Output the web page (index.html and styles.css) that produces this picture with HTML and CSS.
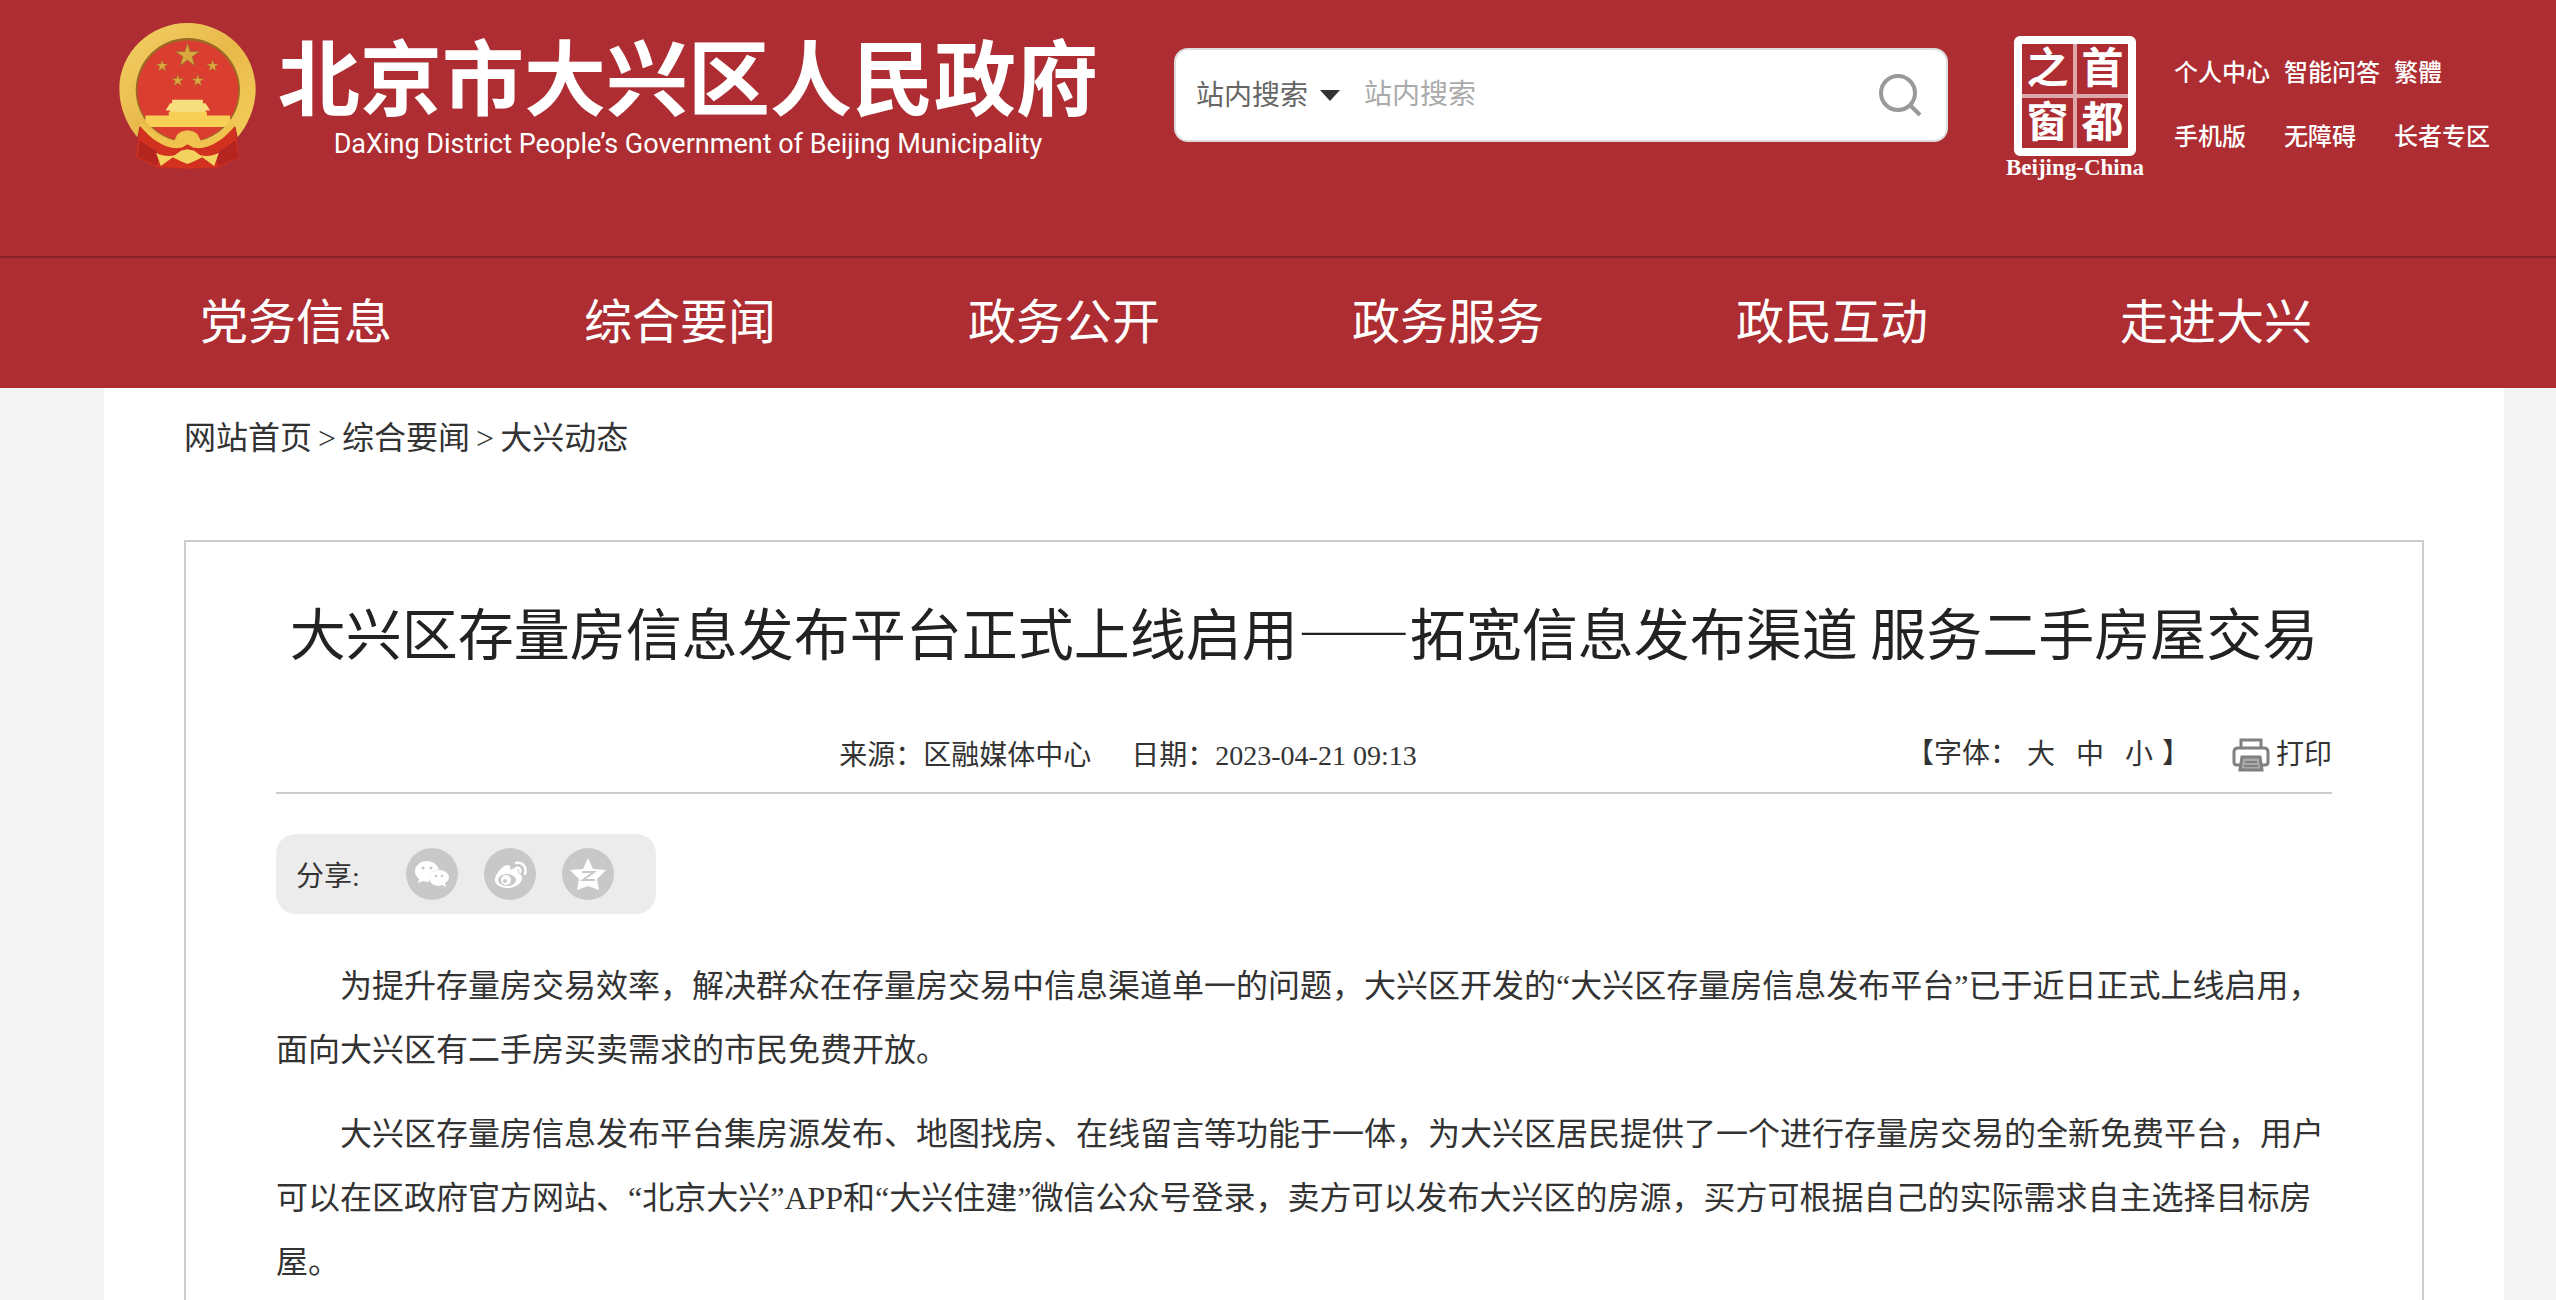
FILE: index.html
```html
<!DOCTYPE html>
<html lang="zh-CN">
<head>
    <meta charset="UTF-8">
    <meta name="viewport" content="width=device-width, initial-scale=1.0">
    <title>大兴区存量房信息发布平台正式上线启用</title>
    <link rel="stylesheet" href="styles.css">
</head>
<body>
    <header class="header">
        <div class="header-top">
            <a class="logo" href="#">
                <svg class="emblem" viewBox="28 35 408 440" aria-hidden="true">
                    <defs>
                        <linearGradient id="gold" x1="0" y1="0" x2="1" y2="1">
                            <stop offset="0" stop-color="#f3d066"/>
                            <stop offset="0.5" stop-color="#e9b94a"/>
                            <stop offset="1" stop-color="#f4cf5c"/>
                        </linearGradient>
                        <path id="star" d="M0-36 8-11H36L14 5 22 32 0 15-22 32-14 5-36-11H-8Z"/>
                    </defs>
                    <path fill="url(#gold)" d="M232 38C120 38 28 126 28 236c0 56 24 108 54 144l6-32c30 38 66 62 112 66h64c46-4 82-28 112-66l6 32c30-36 54-88 54-144C436 126 344 38 232 38Z"/>
                    <circle cx="233" cy="239" r="156" fill="#9a6a25"/>
                    <circle cx="233" cy="241" r="151" fill="#dc3d31"/>
                    <g fill="#d9a93f" stroke="#8d6a25" stroke-width="2">
                        <use href="#star" transform="translate(232 134)"/>
                        <use href="#star" transform="translate(156 166) scale(.5)"/>
                        <use href="#star" transform="translate(307 166) scale(.5)"/>
                        <use href="#star" transform="translate(203 210) scale(.5)"/>
                        <use href="#star" transform="translate(263 210) scale(.5)"/>
                    </g>
                    <path fill="#f7de7e" d="M186 268h92v10h8l14 22h-14v8H180v-8h-14l14-22h6Z"/>
                    <path fill="#f7cf55" d="M176 304h114v11h70v16l-14 18H120l-14-18v-16h70Z"/>
                    <path fill="#d3311f" d="M90 346c40 40 70 62 104 66l38-14 38 14c34-4 64-26 104-66l12 94-60 30-94 4-94-4-60-30Z"/>
                    <path fill="#b5251f" d="M88 390 150 430 140 466 82 440ZM376 390 314 430 324 466 384 440Z"/>
                    <path fill="#f0c24e" d="M94 335c34 38 66 54 98 56l10-20 12-8 18-4 18 4 12 8 10 20c32-2 64-18 98-56l4 10c-30 40-70 66-108 68l-18-2-16-10-16 10-18 2c-38-2-78-28-108-68Z"/>
                    <path fill="#f3d35f" d="M138 426c20 10 36 12 56 8l18-14 20-4 20 4 18 14c20 4 36 2 56-8l-14 40-36-26-24 12-20 8-20-8-24-12-36 26Z"/>
                </svg>
                <span class="logo-text">
                    <span class="logo-cn">北京市大兴区人民政府</span>
                    <span class="logo-en">DaXing District People’s Government of Beijing Municipality</span>
                </span>
            </a>

            <form class="search">
                <select class="search-type" aria-label="搜索范围">
                    <option>站内搜索</option>
                </select>
                <svg class="search-arrow" viewBox="0 0 20 11" aria-hidden="true"><path fill="#333" d="M0 0h20L10 11Z"/></svg>
                <input class="search-input" type="text" placeholder="站内搜索" aria-label="站内搜索">
                <button class="search-button" type="submit" aria-label="搜索">
                    <svg viewBox="0 0 44 44" fill="none" stroke="#999" stroke-width="4" aria-hidden="true">
                        <circle cx="20" cy="20" r="17"/>
                        <path d="m32 32 10 10"/>
                    </svg>
                </button>
            </form>

            <a class="seal" href="#">
                <span class="seal-box">
                    <span>之</span><span>首</span>
                    <span>窗</span><span>都</span>
                </span>
                <span class="seal-name">Beijing-China</span>
            </a>

            <div class="top-links">
                <a href="#">个人中心</a>
                <a href="#">智能问答</a>
                <a href="#">繁體</a>
                <a href="#">手机版</a>
                <a href="#">无障碍</a>
                <a href="#">长者专区</a>
            </div>
        </div>

        <nav class="nav">
            <a href="#">党务信息</a>
            <a href="#">综合要闻</a>
            <a href="#">政务公开</a>
            <a href="#">政务服务</a>
            <a href="#">政民互动</a>
            <a href="#">走进大兴</a>
        </nav>
    </header>

    <main class="container">
        <div class="breadcrumb">
            <a href="#">网站首页</a><span>&gt;</span><a href="#">综合要闻</a><span>&gt;</span><a href="#">大兴动态</a>
        </div>

        <article class="article">
            <h1>大兴区存量房信息发布平台正式上线启用——拓宽信息发布渠道 服务二手房屋交易</h1>

            <div class="meta">
                <div class="meta-info">
                    <span>来源：区融媒体中心</span>
                    <span>日期：2023-04-21 09:13</span>
                </div>
                <div class="meta-tools">
                    <div class="font-size">
                        <span class="font-label">【字体：</span>
                        <button type="button">大</button>
                        <button type="button">中</button>
                        <button type="button">小</button>
                        <span class="bracket">】</span>
                    </div>
                    <button class="print" type="button">
                        <svg viewBox="0 0 38 34" fill="none" stroke="#808080" stroke-width="3" aria-hidden="true">
                            <path d="M9 10V2h20v8"/>
                            <path d="M8 27H5q-3 0-3-3V14q0-4 4-4h26q4 0 4 4v10q0 3-3 3h-3"/>
                            <path fill="#aaa" d="M10 19h18l2 13H8Z"/>
                            <path stroke-width="2" d="M13 24h12M12 28h14"/>
                        </svg>
                        打印
                    </button>
                </div>
            </div>

            <div class="share">
                <span>分享:</span>
                <div class="share-icons">
                    <a href="#" aria-label="微信">
                        <svg viewBox="0 0 52 52" aria-hidden="true">
                            <path fill="#fff" d="M21 13c-7 0-12 5-12 10 0 4 2 6 4 8l-1 4 5-2 4 1h2c-1-8 5-13 10-12-1-5-6-9-12-9Z"/>
                            <path fill="#fff" d="M33 22c-6 0-10 4-10 8s4 8 10 8l3-1 4 2-1-4c2-1 4-3 4-6 0-4-5-7-10-7Z"/>
                            <g fill="#c8c8c8"><circle cx="17" cy="20" r="1.6"/><circle cx="25" cy="20" r="1.6"/><circle cx="30" cy="28" r="1.3"/><circle cx="36" cy="28" r="1.3"/></g>
                        </svg>
                    </a>
                    <a href="#" aria-label="微博">
                        <svg viewBox="0 0 52 52" aria-hidden="true">
                            <path fill="#fff" d="M24 17c-3-1-12 7-13 14-1 5 5 9 12 9 9 0 15-5 15-10 0-3-2-4-4-5 1-4-2-6-8-3 1-3 0-5-2-5Z"/>
                            <ellipse cx="23" cy="32" rx="9" ry="6" fill="#c8c8c8"/>
                            <circle cx="22" cy="32" r="5" fill="#fff"/>
                            <circle cx="21" cy="33" r="2" fill="#c8c8c8"/>
                            <path fill="none" stroke="#fff" stroke-width="2.5" stroke-linecap="round" d="M32 15c7-1 11 4 9 11M32 20c3-1 5 1 4 4"/>
                        </svg>
                    </a>
                    <a href="#" aria-label="QQ空间">
                        <svg viewBox="0 0 52 52" aria-hidden="true">
                            <path fill="#fff" d="m26 10 5 11 13 1-9 9 2 11-11-4-11 4 2-11-9-9 13-1Z"/>
                            <path fill="none" stroke="#c8c8c8" stroke-width="2" d="M20 24h12l-11 8h12"/>
                        </svg>
                    </a>
                </div>
            </div>

            <div class="content">
                <p>为提升存量房交易效率，解决群众在存量房交易中信息渠道单一的问题，大兴区开发的“大兴区存量房信息发布平台”已于近日正式上线启用，面向大兴区有二手房买卖需求的市民免费开放。</p>
                <p>大兴区存量房信息发布平台集房源发布、地图找房、在线留言等功能于一体，为大兴区居民提供了一个进行存量房交易的全新免费平台，用户可以在区政府官方网站、“北京大兴”APP和“大兴住建”微信公众号登录，卖方可以发布大兴区的房源，买方可根据自己的实际需求自主选择目标房屋。</p>
            </div>
        </article>
    </main>
</body>
</html>
```

FILE: styles.css
```css
* {
    box-sizing: border-box;
}

body {
    margin: 0;
    background-color: #f4f4f4;
    color: #333;
    font-family: "Liberation Serif", "Noto Sans CJK SC", serif;
    font-size: 28px;
}

a {
    color: inherit;
    text-decoration: none;
}

button,
input,
select {
    margin: 0;
    padding: 0;
    border: none;
    background: none;
    color: inherit;
    font: inherit;
}

button {
    cursor: pointer;
}

.header {
    background-color: #ad2d32;
    color: #fff;
}

/* 顶部 */
.header-top {
    display: flex;
    align-items: flex-start;
    height: 256px;
    padding: 22px 52px 0 119px;
}

.logo {
    display: flex;
    gap: 22px;
}

.emblem {
    width: 137px;
    height: 147px;
}

.logo-text {
    display: flex;
    flex-direction: column;
    align-items: center;
    font-family: Roboto, "Noto Sans CJK SC", sans-serif;
    white-space: nowrap;
}

.logo-cn {
    font-family: "Noto Sans CJK SC", sans-serif;
    font-size: 82px;
    font-weight: bold;
    line-height: 104px;
}

.logo-en {
    font-size: 27px;
    line-height: 36px;
}

.search {
    display: flex;
    flex: 1;
    align-items: center;
    height: 94px;
    margin: 26px 58px 0 76px;
    padding: 0 24px 0 20px;
    border: 2px solid #ddd;
    border-radius: 14px;
    background-color: #fff;
}

.search-type {
    width: 112px;
    appearance: none;
    color: #666;
}

.search-arrow {
    width: 20px;
    height: 11px;
    margin: 0 24px 0 12px;
}

.search-input {
    flex: 1;
    min-width: 0;
    outline: none;
    color: #333;
}

.search-input::placeholder {
    color: #aaa;
}

.search-button svg {
    display: block;
    width: 44px;
    height: 44px;
}

.seal {
    display: flex;
    flex-direction: column;
    align-items: center;
    margin: 14px 30px 0 0;
}

.seal-box {
    display: grid;
    grid-template-columns: 1fr 1fr;
    gap: 4px;
    width: 122px;
    height: 120px;
    border: 8px solid #fff;
    border-radius: 6px;
    background:
        linear-gradient(#dda6a8, #dda6a8) center / 4px 100% no-repeat,
        linear-gradient(#dda6a8, #dda6a8) center / 100% 4px no-repeat;
    font-size: 42px;
    font-weight: bold;
    line-height: 50px;
    text-align: center;
}

.seal-name {
    font-size: 23px;
    font-weight: bold;
    line-height: 24px;
}

.top-links {
    display: grid;
    grid-template-columns: repeat(3, 110px);
    padding-top: 19px;
    font-size: 24px;
    font-weight: 500;
    line-height: 64px;
}

/* 导航 */
.nav {
    display: grid;
    grid-template-columns: repeat(6, 1fr);
    padding: 0 148px 0 104px;
    border-top: 2px solid #862327;
    font-size: 48px;
    line-height: 130px;
    text-align: center;
}

/* 正文 */
.container {
    margin: 0 52px 0 104px;
    padding: 0 80px 80px;
    background-color: #fff;
}

.breadcrumb {
    display: flex;
    gap: 6px;
    padding: 18px 0 70px;
    font-size: 32px;
    line-height: 64px;
}

.article {
    padding: 46px 90px;
    border: 2px solid #ccc;
}

.article h1 {
    margin: 0;
    color: #222;
    font-family: "Noto Sans CJK SC", sans-serif;
    font-size: 56px;
    font-weight: normal;
    line-height: 86px;
    text-align: center;
}

.meta {
    display: grid;
    grid-template-columns: 8fr auto 13fr;
    margin-top: 52px;
    padding-bottom: 8px;
    border-bottom: 2px solid #ccc;
    line-height: 56px;
}

.meta-info {
    display: flex;
    grid-column: 2;
    gap: 40px;
    padding-top: 2px;
}

.meta-tools {
    display: flex;
    justify-content: flex-end;
    gap: 42px;
}

.font-size {
    display: flex;
    gap: 21px;
}

.font-size .bracket {
    margin-left: -12px;
}

.font-size .font-label {
    margin-right: -12px;
}

.print {
    display: flex;
    align-items: center;
    gap: 6px;
}

.print svg {
    width: 38px;
    height: 34px;
}

.share {
    display: flex;
    align-items: center;
    width: 380px;
    height: 80px;
    margin-top: 40px;
    padding: 0 20px;
    border-radius: 20px;
    background-color: #ececec;
}

.share-icons {
    display: flex;
    gap: 26px;
    margin-left: 46px;
}

.share-icons a {
    width: 52px;
    height: 52px;
    border-radius: 50%;
    background-color: #c8c8c8;
}

.share-icons svg {
    display: block;
}

.content {
    margin-top: 40px;
    font-size: 32px;
    line-height: 64px;
}

.content p {
    margin: 0 0 20px;
    text-indent: 2em;
}
```
